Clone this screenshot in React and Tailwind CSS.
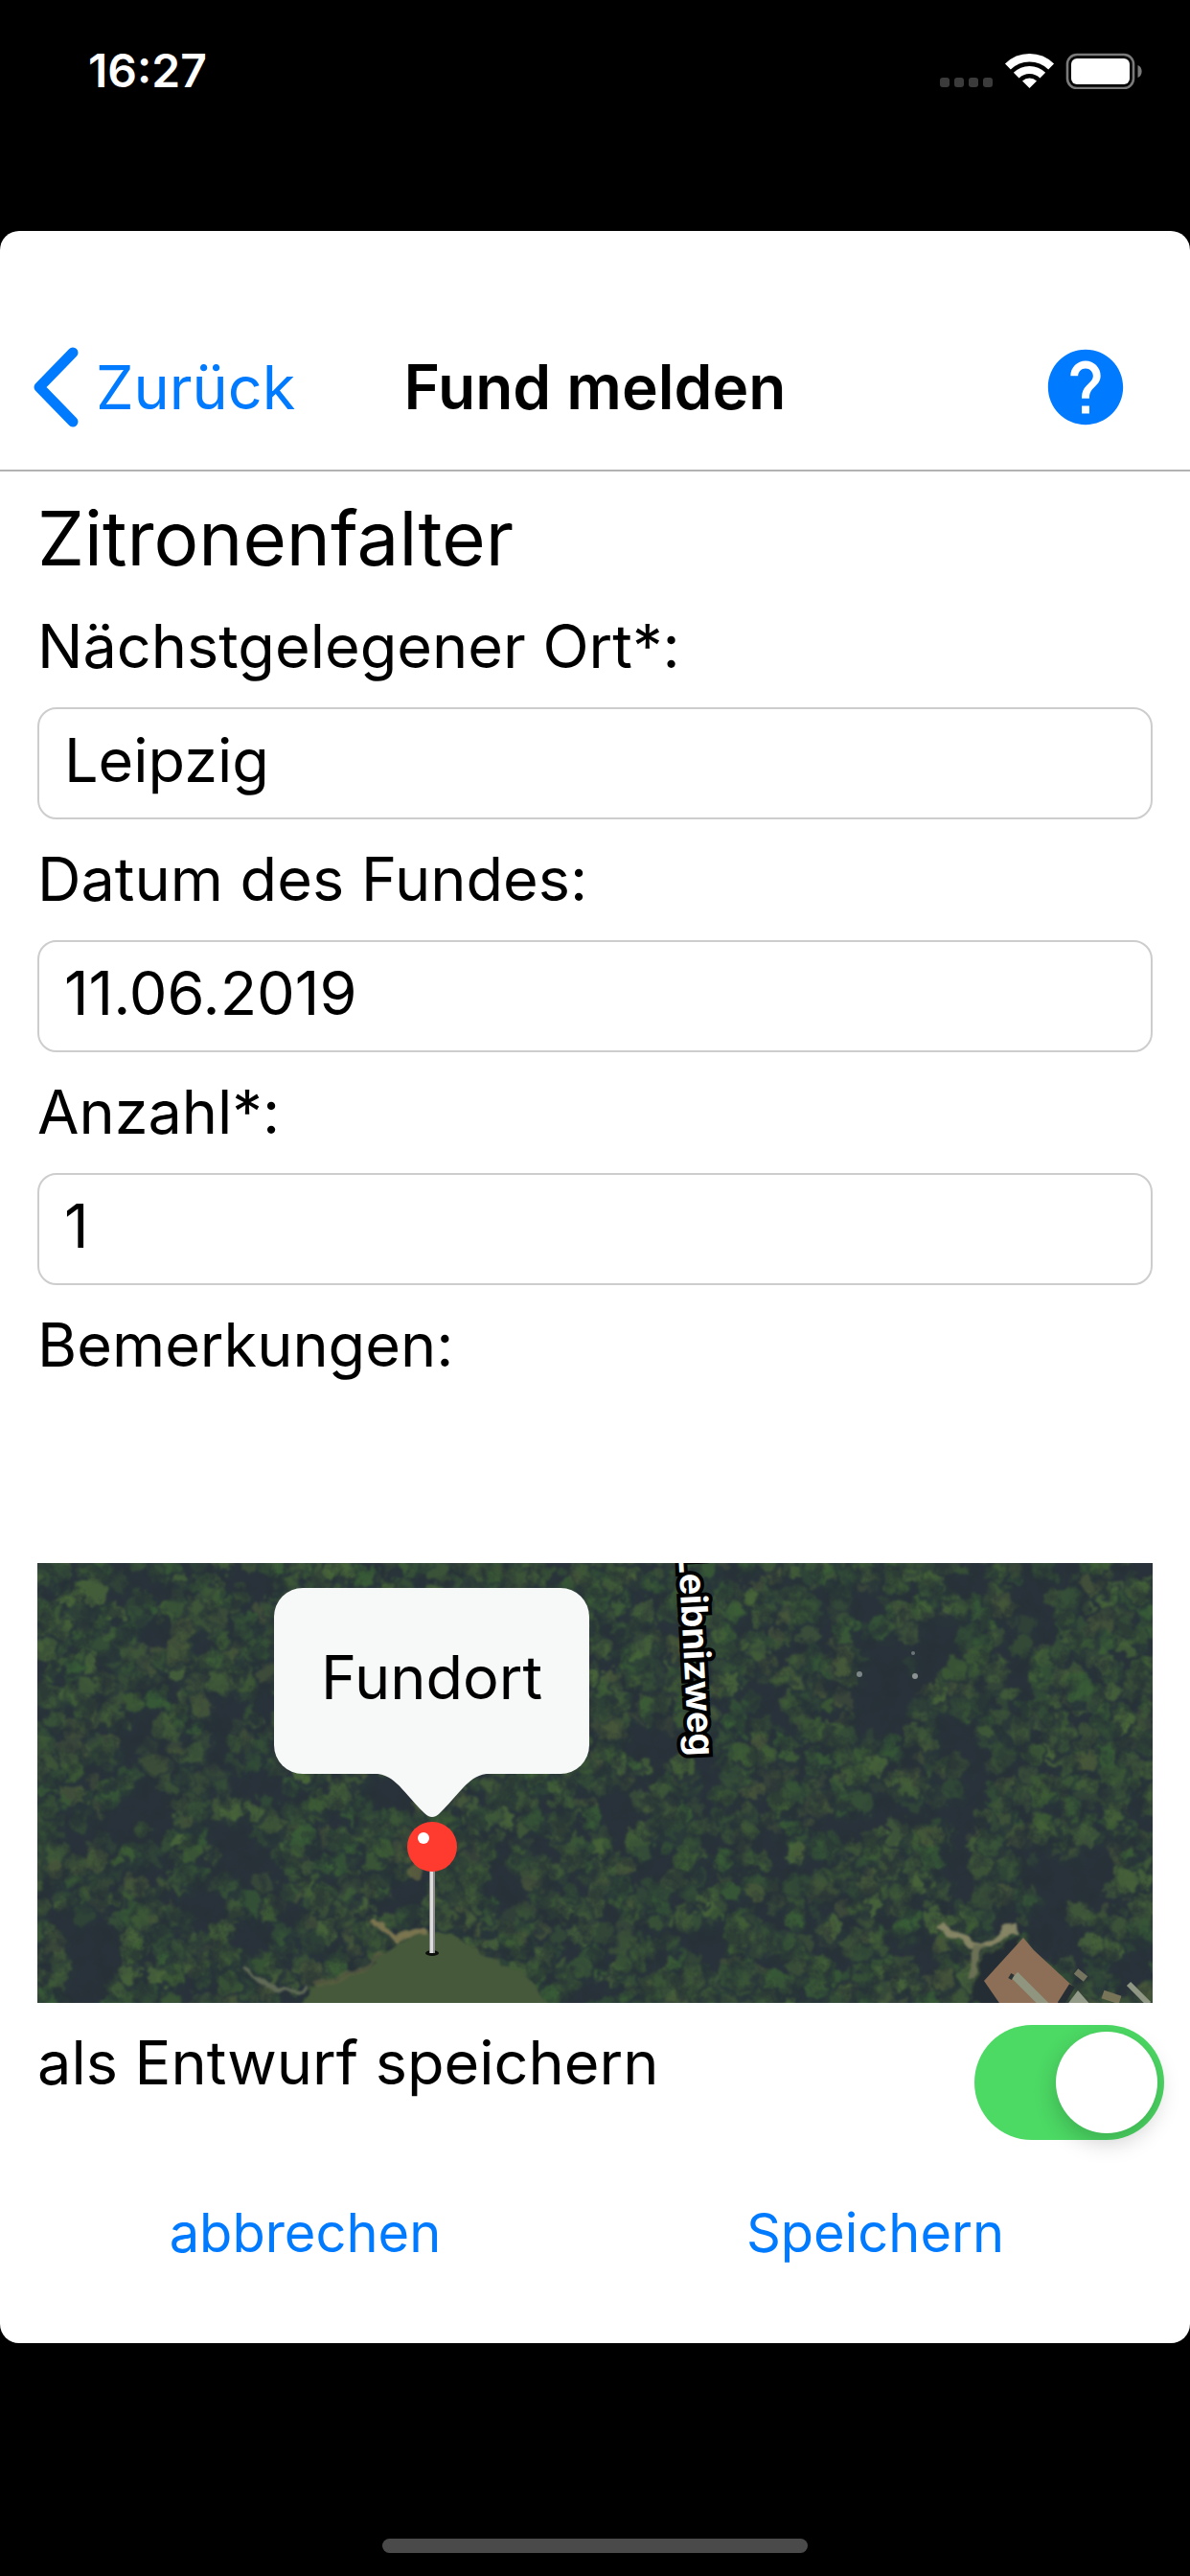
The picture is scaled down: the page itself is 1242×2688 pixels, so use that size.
import React, { useState } from "react";
import { MdHelp } from "react-icons/md";

// small seeded generator, keeps the tree canopy the same on every render
const createRandom = (seed) => () => {
  seed = (seed * 1664525 + 1013904223) % 4294967296;
  return seed / 4294967296;
};

// shadows between the trees: x, y, rx, ry
const shadows = [
  [91, 22, 22, 26], [131, 77, 22, 16], [194, 157, 18, 28], [111, 187, 26, 20],
  [99, 270, 48, 26], [214, 303, 26, 38], [56, 405, 32, 50], [230, 230, 26, 18],
  [376, 240, 26, 26], [388, 343, 18, 18], [175, 357, 26, 24], [222, 392, 30, 22],
  [272, 243, 22, 16], [882, 132, 34, 58], [875, 37, 32, 14], [946, 75, 36, 26],
  [660, 190, 58, 20], [698, 226, 12, 34], [1025, 103, 14, 50], [1041, 28, 22, 22],
  [962, 177, 22, 24], [1033, 217, 32, 18], [978, 236, 20, 20], [906, 264, 70, 14],
  [827, 270, 20, 16], [962, 305, 18, 48], [601, 258, 26, 24], [1077, 330, 48, 24],
  [1062, 388, 36, 28], [803, 320, 26, 14], [708, 397, 22, 26], [740, 130, 22, 12],
  [815, 74, 20, 16], [1140, 425, 20, 30], [640, 320, 24, 14], [590, 445, 30, 12],
  [490, 340, 26, 26], [530, 300, 24, 18], [160, 445, 30, 12], [30, 290, 16, 24],
];

const greens = [
  "#3d5c35", "#375238", "#446038", "#334d37", "#4a673a", "#3e5538", "#48573a", "#385d36",
];

const createTrees = () => {
  const random = createRandom(27);
  const trees = [];
  for (let i = 0; i < 3600; i++) {
    const x = random() * 1184 - 10;
    const y = random() * 479 - 10;
    const r = 6 + random() * 11;
    const color = greens[Math.floor(random() * greens.length)];
    const opacity = 0.35 + random() * 0.5;
    const inShadow = shadows.some(
      ([sx, sy, rx, ry]) => ((x - sx) / rx) ** 2 + ((y - sy) / ry) ** 2 < 1
    );
    if (inShadow && random() > 0.04) continue;
    trees.push({ x, y, r, color, opacity });
  }
  return trees;
};

const trees = createTrees();

const SatelliteImage = () => (
  <svg
    viewBox="0 0 1164 459"
    preserveAspectRatio="xMidYMid slice"
    className="block h-full w-full"
    aria-hidden="true"
  >
    <defs>
      <filter id="leaves" x="0" y="0" width="100%" height="100%" colorInterpolationFilters="sRGB">
        <feTurbulence type="fractalNoise" baseFrequency="0.08" numOctaves="3" seed="4" result="noise" />
        <feDisplacementMap in="SourceGraphic" in2="noise" scale="20" xChannelSelector="R" yChannelSelector="G" />
        <feGaussianBlur stdDeviation="1" />
      </filter>
      <filter id="edges" x="-5%" y="-5%" width="110%" height="110%" colorInterpolationFilters="sRGB">
        <feTurbulence type="fractalNoise" baseFrequency="0.06" numOctaves="2" seed="9" result="noise" />
        <feDisplacementMap in="SourceGraphic" in2="noise" scale="14" xChannelSelector="R" yChannelSelector="G" />
        <feGaussianBlur stdDeviation="1" />
      </filter>
      <filter id="grain" x="0" y="0" width="100%" height="100%" colorInterpolationFilters="sRGB">
        <feTurbulence type="fractalNoise" baseFrequency="0.05" numOctaves="4" seed="12" />
        <feColorMatrix values="0 0 0 0 0.15  0 0 0 0 0.19  0 0 0 0 0.21  0 4 0 0 -1.8" />
      </filter>
    </defs>

    <rect width="1164" height="459" fill="#29323a" />
    <g filter="url(#leaves)">
      <rect x="-20" y="-20" width="1204" height="499" fill="#29323a" />
      {trees.map((tree, index) => (
        <g key={index} opacity={tree.opacity}>
          <circle cx={tree.x + 2} cy={tree.y + 3} r={tree.r} fill="#28353a" />
          <circle cx={tree.x} cy={tree.y} r={tree.r * 0.8} fill={tree.color} />
        </g>
      ))}
    </g>
    <rect width="1164" height="459" filter="url(#grain)" opacity="0.6" />

    {/* meadow */}
    <g filter="url(#edges)">
      <path
        d="M274 470 C280 440 310 436 356 420 C364 400 380 388 408 386 C425 385 440 392 451 400 C470 414 500 420 512 434 C522 446 530 452 536 470 Z"
        fill="#47593b"
      />
      <path d="M290 442 C320 430 350 424 360 408" stroke="#626343" strokeWidth="6" fill="none" opacity="0.6" />
      <path d="M350 372 C360 382 366 386 374 392 C384 383 396 384 410 385" stroke="#7a744f" strokeWidth="6" fill="none" />
      <path d="M218 424 C232 432 238 442 248 446 C258 448 268 446 282 443" stroke="#616a57" strokeWidth="4" fill="none" />
      <circle cx="396" cy="322" r="8" fill="#6b6a42" opacity="0.7" />
    </g>

    {/* house and gravel path */}
    <g filter="url(#edges)">
      <path d="M940 378 C955 386 968 392 984 400 C996 396 1006 388 1019 382" stroke="#858464" strokeWidth="8" fill="none" />
      <path d="M984 398 C980 410 974 420 972 434" stroke="#6c7155" strokeWidth="8" fill="none" />
      <path d="M1024 388 L984 416 L974 459 L1006 470 Z" fill="#252d34" />
    </g>
    <path d="M1029 391 L1040 404 L1080 441 L1062 462 L1006 462 L988 436 Z" fill="#8d6f57" />
    <path d="M1020 430 L1052 462" stroke="#8f957f" strokeWidth="9" />
    <path d="M1015 434 L1018 429" stroke="#2c3334" strokeWidth="4" />
    <path d="M1080 441 L1068 460" stroke="#262e33" strokeWidth="7" />
    <path d="M1086 446 L1100 462 L1074 462 Z" fill="#939a88" />
    <path d="M1084 426 L1094 434" stroke="#75755f" strokeWidth="7" />
    <path d="M1112 450 L1130 456" stroke="#777457" strokeWidth="9" />
    <path d="M1139 439 L1160 460" stroke="#8f9683" strokeWidth="6" />
    <circle cx="858" cy="116" r="3" fill="#7c8688" />
    <circle cx="916" cy="118" r="3" fill="#8d9292" />
    <circle cx="914" cy="94" r="2" fill="#6d7677" />
  </svg>
);

const Pin = () => (
  <svg width="54" height="142" viewBox="0 0 54 142" className="mt-1" aria-hidden="true">
    <ellipse cx="27" cy="138" rx="7" ry="3" fill="#0c0f0c" />
    <rect x="24" y="50" width="6" height="88" fill="#8f8f8f" />
    <rect x="25" y="50" width="3" height="88" fill="#dedede" />
    <circle cx="27" cy="27" r="26" fill="#ff3b30" />
    <circle cx="18" cy="18" r="6" fill="#fff" />
  </svg>
);

const StatusBar = () => (
  <div className="flex h-[148px] items-center justify-between pl-[92px] pr-[50px]">
    <span className="text-[48px] leading-none font-semibold text-white">16:27</span>
    <svg width="212" height="38" viewBox="0 0 212 38" aria-hidden="true">
      <g fill="#3b3b3b">
        <rect x="1" y="26" width="10" height="10" rx="3" />
        <rect x="16" y="26" width="10" height="10" rx="3" />
        <rect x="31" y="26" width="10" height="10" rx="3" />
        <rect x="46" y="26" width="10" height="10" rx="3" />
      </g>
      <g fill="none" stroke="#fff">
        <path d="M71.9 14.5 A32.3 32.3 0 0 1 117.1 14.5" strokeWidth="8.4" />
        <path d="M80.7 23.6 A19.5 19.5 0 0 1 108.3 23.6" strokeWidth="8" />
      </g>
      <path d="M94.5 37 L87 29.4 A11 11 0 0 1 102 29.4 Z" fill="#fff" />
      <rect x="134" y="2" width="69" height="35" rx="10" fill="none" stroke="#7a7a7a" strokeWidth="2.6" />
      <rect x="138" y="6" width="61" height="27" rx="6" fill="#fff" />
      <path d="M207.500 13 C213 15 213 24 207.500 26 Z" fill="#7a7a7a" />
    </svg>
  </div>
);

const Field = ({ id, label, value, onChange }) => (
  <div className="pt-[22px]">
    <label htmlFor={id} className="block text-[63px] leading-[80px]">
      {label}
    </label>
    <input
      id={id}
      type="text"
      value={value}
      onChange={(e) => onChange(e.target.value)}
      className="mt-6 block h-[117px] w-full rounded-[20px] border-2 border-[#cdcdcd] bg-white px-[26px] pb-2 text-[63px] outline-none"
    />
  </div>
);

const App = () => {
  const [place, setPlace] = useState("Leipzig");
  const [date, setDate] = useState("11.06.2019");
  const [count, setCount] = useState("1");
  const [notes, setNotes] = useState("");
  const [draft, setDraft] = useState(true);

  return (
    <div className="flex min-h-screen flex-col bg-black font-['Inter',sans-serif] text-black">
      <StatusBar />

      <main className="mt-[93px] rounded-[20px] bg-white">
        <header className="grid h-[251px] grid-cols-[1fr_auto_1fr] items-center border-b-2 border-[#b2b2b2] pt-[76px]">
          <button type="button" className="flex items-center gap-[18px] pl-[34px] text-[63px] leading-[80px] text-[#007aff]">
            <svg width="48" height="84" viewBox="0 0 48 84" fill="none" aria-hidden="true">
              <path d="M42 6 L7 42 L42 78" stroke="#007aff" strokeWidth="11" strokeLinecap="round" strokeLinejoin="round" />
            </svg>
            Zurück
          </button>
          <h1 className="text-[64px] leading-[80px] font-semibold">Fund melden</h1>
          <button type="button" aria-label="Hilfe" className="justify-self-end pr-[62px] text-[#007aff]">
            <MdHelp size={94} />
          </button>
        </header>

        <form onSubmit={(e) => e.preventDefault()}>
          <div className="px-[39px] pt-5">
            <h2 className="text-[78px] leading-[100px]">Zitronenfalter</h2>
            <Field id="place" label="Nächstgelegener Ort*:" value={place} onChange={setPlace} />
            <Field id="date" label="Datum des Fundes:" value={date} onChange={setDate} />
            <Field id="count" label="Anzahl*:" value={count} onChange={setCount} />
            <div className="pt-[22px]">
              <label htmlFor="notes" className="block text-[63px] leading-[80px]">
                Bemerkungen:
              </label>
              <textarea
                id="notes"
                value={notes}
                onChange={(e) => setNotes(e.target.value)}
                className="block h-[188px] w-full resize-none bg-transparent text-[63px] outline-none"
              />
            </div>

            <div className="relative h-[459px] overflow-hidden">
              <SatelliteImage />
              <span className="absolute top-[-12px] left-[702px] origin-top-left rotate-[87deg] text-[38px] leading-none font-bold text-white [paint-order:stroke_fill] [-webkit-text-stroke:8px_black]">
                Leibnizweg
              </span>
              <div className="absolute top-[26px] left-[247px] flex w-[329px] flex-col items-center">
                <div className="flex h-[194px] w-full items-center justify-center rounded-[30px] bg-[#f7f8f8] pb-2 text-[63px]">
                  Fundort
                </div>
                <svg width="132" height="46" viewBox="0 0 132 46" className="-mt-px" aria-hidden="true">
                  <path d="M0 0 C28 1 30 14 58 42 Q66 50 74 42 C102 14 104 1 132 0 Z" fill="#f7f8f8" />
                </svg>
                <Pin />
              </div>
            </div>
          </div>

          <div className="flex items-start justify-between pt-[23px] pr-[27px] pl-[39px]">
            <label htmlFor="draft" className="text-[63px] leading-[78px]">
              als Entwurf speichern
            </label>
            <span className="relative h-[120px] w-[198px]">
              <input
                id="draft"
                type="checkbox"
                role="switch"
                checked={draft}
                onChange={(e) => setDraft(e.target.checked)}
                className="peer block h-full w-full appearance-none rounded-full bg-gray-200 checked:bg-[#4cd964]"
              />
              <span className="pointer-events-none absolute top-[7px] left-[7px] h-[106px] w-[106px] rounded-full bg-white shadow-[0_9px_24px_rgba(0,0,0,0.2)] peer-checked:left-[85px]" />
            </span>
          </div>

          <div className="mt-[57px] grid grid-cols-2 pr-[31px] pb-[75px] pl-[21px] text-[56px] leading-[80px] text-[#007aff]">
            <button type="button">abbrechen</button>
            <button type="submit">Speichern</button>
          </div>
        </form>
      </main>

      <div className="mx-auto mt-auto mb-6 h-[15px] w-[444px] rounded-full bg-[#4a4a4a]" />
    </div>
  );
};

export default App;
